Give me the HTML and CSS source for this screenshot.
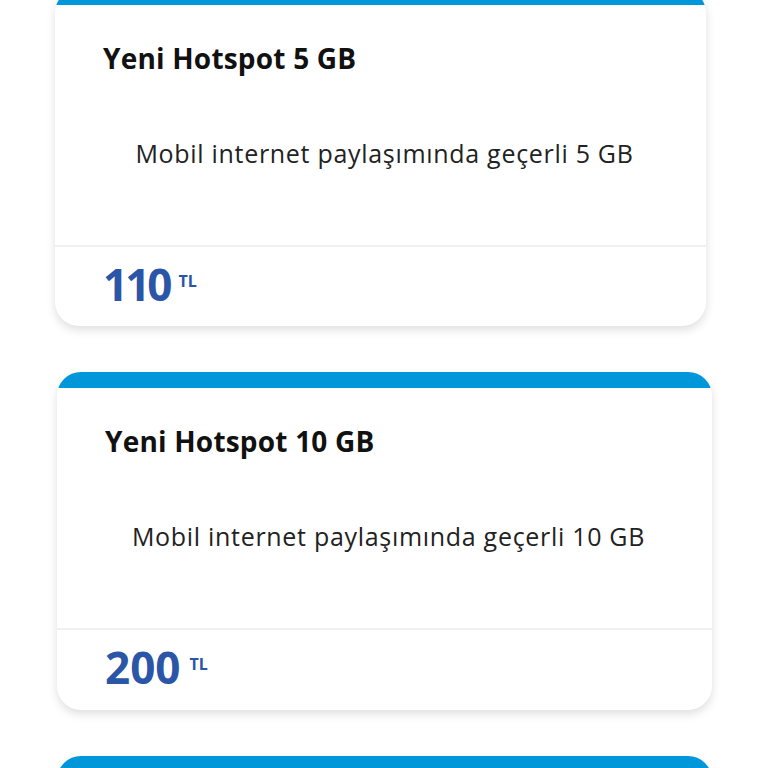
FILE: index.html
```html
<!doctype html>
<html lang="tr">
<head>
  <meta charset="UTF-8">
  <title>Hotspot Paketleri</title>
  <meta name="viewport" content="width=device-width, initial-scale=1.0">
  <link rel="stylesheet" href="styles.css">
</head>
<body>

  <div class="paket-list">
    <div class="paket paket-1">
      <div class="paket-bar"></div>
      <div class="paket-body">
        <h3 class="paket-title">Yeni Hotspot 5 GB</h3>
        <p class="paket-desc">Mobil internet paylaşımında geçerli 5 GB</p>
      </div>
      <div class="paket-foot">
        <span class="price narrow">110</span><span class="cur">TL</span>
      </div>
    </div>

    <div class="paket paket-2">
      <div class="paket-bar"></div>
      <div class="paket-body">
        <h3 class="paket-title">Yeni Hotspot 10 GB</h3>
        <p class="paket-desc">Mobil internet paylaşımında geçerli 10 GB</p>
      </div>
      <div class="paket-foot">
        <span class="price">200</span><span class="cur">TL</span>
      </div>
    </div>

    <!-- sonraki paket, ekranın altında kalıyor -->
    <div class="paket paket-3">
      <div class="paket-bar"></div>
    </div>
  </div>

</body>
</html>
```

FILE: styles.css
```css
body {
  margin: 0;
  background: #fff;
  font-family: "Open Sans", "Noto Sans", sans-serif;
  color: #111;
  overflow: hidden;
}
.paket-list {
  display: flex;
  flex-direction: column;
  gap: 46px;
  margin-top: -11px;
}
.paket {
  background: #fff;
  border-radius: 24px;
  overflow: hidden;
  box-shadow: 0 4px 10px rgba(0,0,0,0.13);
  height: 337px;
  display: flex;
  flex-direction: column;
  flex-shrink: 0;
}
.paket-1 { margin-left: 55px; width: 651px; }
.paket-2 { margin-left: 57px; width: 655px; height: 338px; }
.paket-3 { margin-left: 57px; width: 655px; }

.paket-bar {
  height: 16px;
  background: #0096da;
}
.paket-body {
  height: 242px;
  padding: 0 40px 0 48px;
  box-sizing: border-box;
  border-bottom: 2px solid #f0f0f0;
}
.paket-title {
  margin: 0;
  padding-top: 37px;
  font-size: 28px;
  line-height: 32px;
  font-weight: 700;
  letter-spacing: 0.2px;
}
.paket-desc {
  margin: 0;
  padding-top: 64px;
  text-align: center;
  font-size: 25px;
  line-height: 30px;
  letter-spacing: 0.7px;
  color: #222;
}
.paket-foot {
  flex: 1;
  padding: 9px 48px 0;
  display: flex;
  align-items: flex-start;
  color: #2b55a6;
  font-weight: 700;
}
.price {
  font-size: 44px;
  line-height: 56px;
}
.price.narrow {
  letter-spacing: -3px;
}
.cur {
  font-size: 16px;
  line-height: 20px;
  margin-left: 9px;
  margin-top: 15px;
}
```
